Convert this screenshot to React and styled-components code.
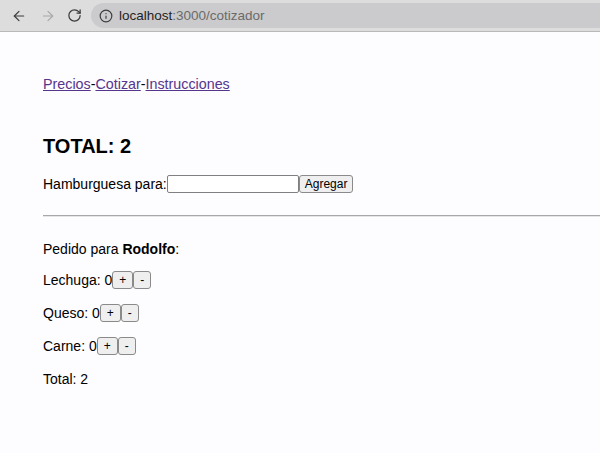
import styled, { createGlobalStyle } from "styled-components";
import { ArrowLeft, ArrowRight, RotateCw, Info } from "lucide-react";

const GlobalStyle = createGlobalStyle`
  html, body {
    margin: 0;
    padding: 0;
    background: #fdfcff;
  }
  body {
    font-family: "Liberation Sans", Arial, sans-serif;
    color: #000;
  }
`;

const Toolbar = styled.div`
  display: flex;
  align-items: center;
  height: 31px;
  background: #dddddd;
  border-bottom: 1px solid #b9b9b9;
  padding-left: 11px;
`;

const NavIcon = styled.span`
  display: flex;
  align-items: center;
  justify-content: center;
  width: 16px;
  height: 16px;
  margin-right: ${(p) => p.$gap || 13}px;
  color: ${(p) => (p.$disabled ? "#a9a9a9" : "#3c3c3c")};
`;

const AddressBar = styled.div`
  flex: 1;
  display: flex;
  align-items: center;
  height: 25px;
  background: #cbcacc;
  border-radius: 13px 0 0 13px;
  padding-left: 8px;
  font-size: 13.5px;
  color: #6a6a6a;
`;

const Host = styled.span`
  color: #1f1f1f;
  margin-left: 6px;
`;

const Page = styled.main`
  padding: 44px 0 0 43px;
  font-size: 14px;
`;

const Nav = styled.nav`
  margin: 0;
  line-height: 17px;
  font-size: 14.3px;
`;

const Link = styled.a`
  color: #56358c;
  text-decoration: underline;
`;

const Heading = styled.h2`
  font-size: 20px;
  font-weight: bold;
  margin: 41px 0 17px;
  line-height: 24px;
`;

const Row = styled.p`
  margin: ${(p) => p.$top || 0}px 0 0;
  height: 18px;
  line-height: 18px;
  display: flex;
  align-items: center;
`;

const TextInput = styled.input`
  width: 132px;
  height: 18px;
  box-sizing: border-box;
  border: 1px solid #808080;
  border-radius: 2px;
  background: #fff;
  padding: 0 3px;
  margin: 0;
`;

const Button = styled.button`
  font-family: "Liberation Sans", Arial, sans-serif;
  font-size: 12px;
  height: 18px;
  box-sizing: border-box;
  padding: 0 ${(p) => p.$pad || 5}px;
  margin: 0;
  border: 1px solid #8a8a8a;
  border-radius: 3px;
  background: #efefef;
  color: #000;
  line-height: 16px;
`;

const Divider = styled.hr`
  margin: 22px 0 0;
  border: none;
  border-top: 1px solid #a8a8a8;
  border-bottom: 1px solid #e6e6e6;
`;

const ingredients = [
  { name: "Lechuga", qty: 0 },
  { name: "Queso", qty: 0 },
  { name: "Carne", qty: 0 },
];

export default function App() {
  return (
    <>
      <GlobalStyle />
      <Toolbar>
        <NavIcon>
          <ArrowLeft size={16} strokeWidth={1.8} />
        </NavIcon>
        <NavIcon $disabled $gap={10}>
          <ArrowRight size={16} strokeWidth={1.8} />
        </NavIcon>
        <NavIcon $gap={9}>
          <RotateCw size={15} strokeWidth={2} />
        </NavIcon>
        <AddressBar>
          <Info size={14} strokeWidth={2} color="#3c3c3c" />
          <Host>localhost</Host>:3000/cotizador
        </AddressBar>
      </Toolbar>
      <Page>
        <Nav>
          <Link href="#">Precios</Link>-<Link href="#">Cotizar</Link>-
          <Link href="#">Instrucciones</Link>
        </Nav>
        <Heading>TOTAL: 2</Heading>
        <Row>
          Hamburguesa para:<TextInput />
          <Button $pad={5}>Agregar</Button>
        </Row>
        <Divider />
        <Row $top={23}>
          Pedido para&nbsp;<b>Rodolfo</b>:
        </Row>
        {ingredients.map((item, i) => (
          <Row $top={i === 0 ? 13 : 15} key={item.name}>
            {item.name}: {item.qty}
            <Button $pad={6}>+</Button>
            <Button $pad={6}>-</Button>
          </Row>
        ))}
        <Row $top={15}>Total: 2</Row>
      </Page>
    </>
  );
}
